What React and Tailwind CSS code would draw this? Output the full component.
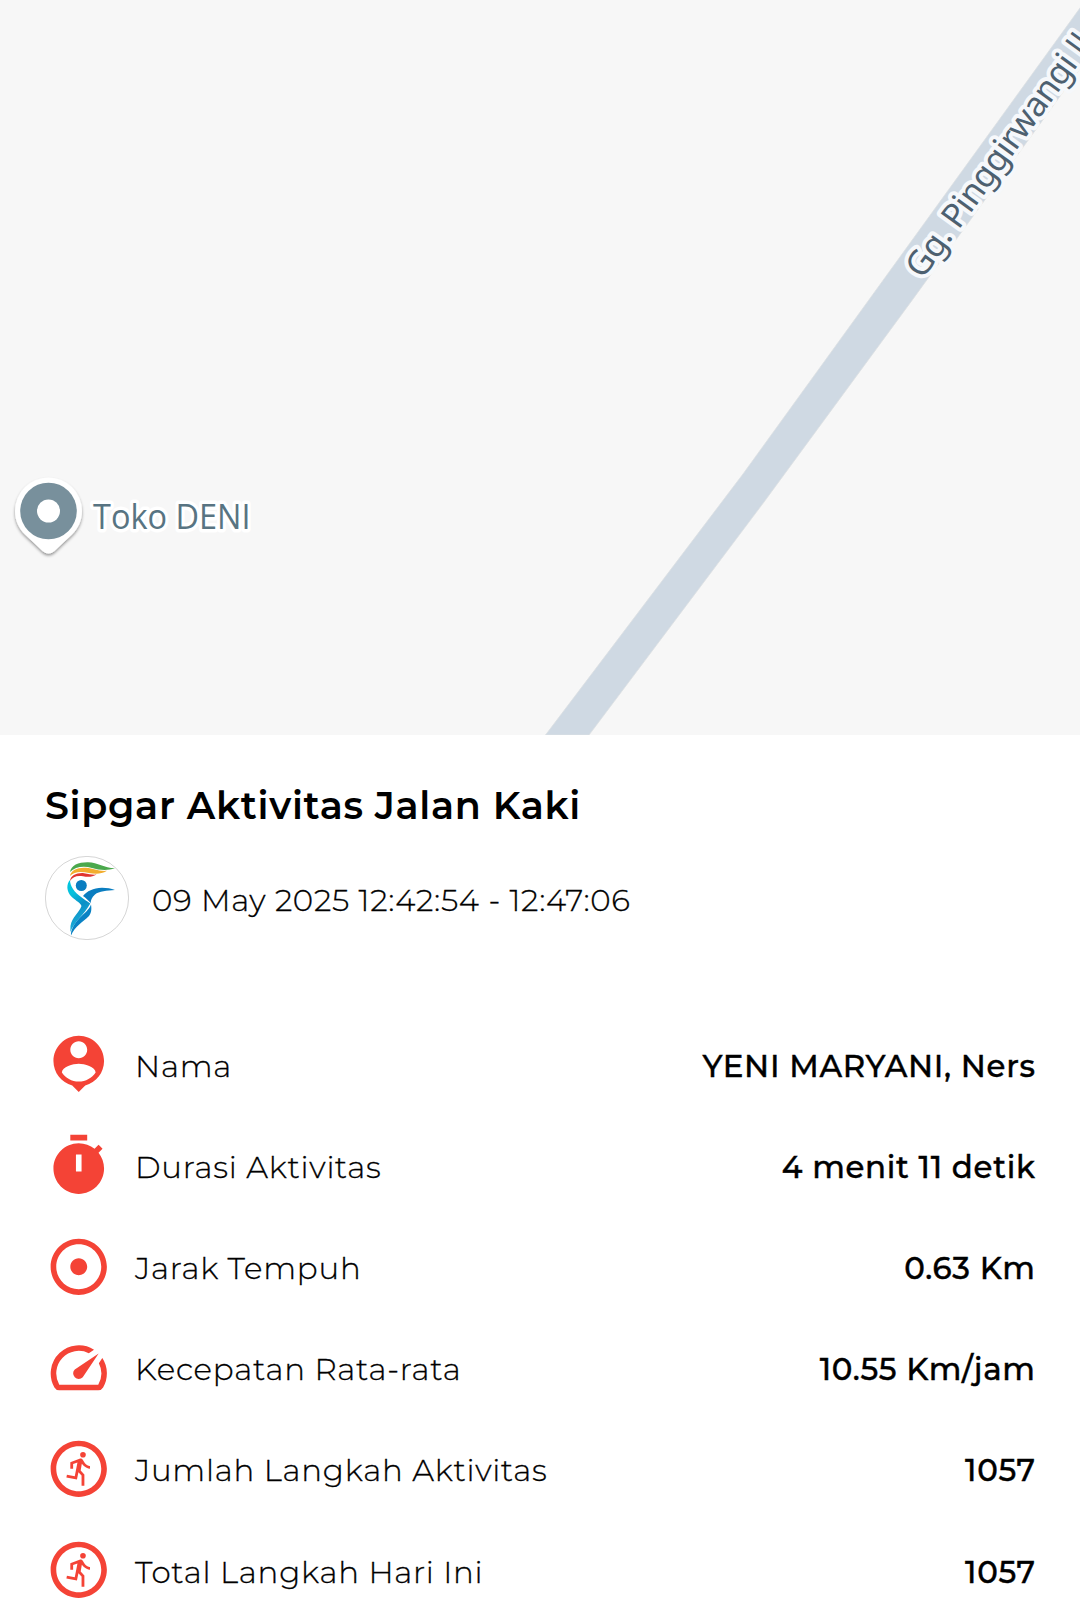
import React from "react";
import { MdAdjust, MdOutlineRunCircle, MdOutlineSpeed } from "react-icons/md";

function PersonPin({ className }) {
  return (
    <svg viewBox="0 0 24 24" fill="currentColor" className={className}>
      <path d="M12 2c-4.97 0-9 4.03-9 9 0 4.17 2.84 7.67 6.69 8.69L12 22l2.31-2.31C18.16 18.67 21 15.17 21 11c0-4.97-4.03-9-9-9zm0 2c1.66 0 3 1.34 3 3s-1.34 3-3 3-3-1.34-3-3 1.34-3 3-3zm0 14.3c-2.5 0-4.71-1.28-6-3.22.03-1.99 4-3.08 6-3.08 1.99 0 5.97 1.09 6 3.08-1.29 1.94-3.5 3.22-6 3.22z" />
    </svg>
  );
}

function Timer({ className }) {
  return (
    <svg viewBox="0 0 24 24" fill="currentColor" className={className}>
      <path d="M9 1h6v2H9zM19.03 7.39l1.42-1.42c-.43-.51-.9-.99-1.41-1.41l-1.42 1.42C16.07 4.74 14.12 4 12 4c-4.97 0-9 4.03-9 9s4.02 9 9 9 9-4.03 9-9c0-2.12-.74-4.07-1.97-5.61zM13 14h-2V8h2v6z" />
    </svg>
  );
}

const rows = [
  { icon: PersonPin, label: "Nama", value: "YENI MARYANI, Ners" },
  { icon: Timer, label: "Durasi Aktivitas", value: "4 menit 11 detik" },
  { icon: MdAdjust, label: "Jarak Tempuh", value: "0.63 Km" },
  { icon: MdOutlineSpeed, label: "Kecepatan Rata-rata", value: "10.55 Km/jam" },
  { icon: MdOutlineRunCircle, label: "Jumlah Langkah Aktivitas", value: "1057" },
  { icon: MdOutlineRunCircle, label: "Total Langkah Hari Ini", value: "1057" },
];

function Map() {
  return (
    <svg viewBox="0 0 1080 735" className="block h-[735px] w-full bg-[#f7f7f7]">
      <defs>
        <filter id="pinShadow" x="-30%" y="-30%" width="160%" height="160%">
          <feDropShadow dx="0" dy="2" stdDeviation="1.8" floodColor="#000" floodOpacity="0.4" />
        </filter>
      </defs>
      <path d="M545.5 735 743 474 1093 -10H1137L912.3 300 764 502 589 735Z" fill="#cfd9e3" stroke="#dcdfe2" strokeWidth="0.8" />
      <g transform="translate(922.5 280) rotate(-54.1)">
        <text
          fontFamily="'Noto Sans', sans-serif"
          fontSize="34"
          letterSpacing="-0.6"
          fill="#4d6070"
          stroke="#f6f8fb"
          strokeWidth="8"
          strokeLinejoin="round"
          paintOrder="stroke"
        >
          Gg. Pinggirwangi <tspan fontFamily="'Open Sans', sans-serif">II</tspan>
        </text>
      </g>
      <path
        d="M48.5 477.5a33.5 33.5 0 0 0-33.5 33.5c0 10 4 17.5 10 23.5L42.5 551q6 5 12 0L72 534.5c6-6 10-13.5 10-23.5a33.5 33.5 0 0 0-33.5-33.5Z"
        fill="#fff"
        filter="url(#pinShadow)"
      />
      <circle cx="48.5" cy="511" r="28.3" fill="#78909c" />
      <circle cx="48.5" cy="511" r="11.5" fill="#fff" />
      <text
        x="93"
        y="529.3"
        fontFamily="'Open Sans', sans-serif"
        fontSize="35.5"
        fontWeight="450"
        textLength="157.5"
        lengthAdjust="spacingAndGlyphs"
        fill="#587482"
        stroke="#fff"
        strokeWidth="7"
        strokeLinejoin="round"
        paintOrder="stroke"
      >
        Toko DENI
      </text>
    </svg>
  );
}

function Logo() {
  return (
    <svg viewBox="0 0 84 84" className="size-[84px] shrink-0">
      <defs>
        <linearGradient id="bodyLeft" x1="0" y1="0" x2="0.3" y2="1">
          <stop offset="0" stopColor="#00c8e0" />
          <stop offset="0.3" stopColor="#08c0dc" />
          <stop offset="0.6" stopColor="#0a8fc6" />
          <stop offset="1" stopColor="#20b4dc" />
        </linearGradient>
      </defs>
      <circle cx="42" cy="42" r="41.6" fill="#fff" stroke="#b8b8b8" strokeWidth="0.6" />
      <path d="M25 16C26 9 34 6 43 6.2C53 6.5 59 12 70 12.3C62 15 54 14 47 12C38 9.5 30 11 25 16Z" fill="#4aa84c" />
      <path d="M25 20C26 14 33 11.2 41 11.8C49 12.5 53 15.500 62 14.8C56 18.500 50 18 44 17C36 15 29 15.500 25 20Z" fill="#f2ad2e" />
      <path d="M25 25C25.500 19.5 32 16.5 39 17.2C44 18 47 19 51.5 18.600C47 21.500 42 21 38 20.300C32 19.300 28 20.500 25 25Z" fill="#e0352f" />
      <circle cx="36.3" cy="29.5" r="5.5" fill="#0a7dc0" />
      <path d="M25 24C21.500 28 21.500 34 25 39C29 44 35 46 36.500 50C34 57 27 61 25.500 70L25.300 76C29 66 39 59 45.300 47.500C39 43 32 39 28 33C26 30 25 27 25 24Z" fill="url(#bodyLeft)" />
      <path d="M38 40C42 35 48 32 57 31.700C62 31.700 66 32.500 70 34C62 34.500 54 35 50 38.500C46.500 41.500 45.800 44.500 45.700 47C43 44 41 42 38 40Z" fill="#0a7dc0" />
      <path d="M46 48.500C46.500 52 47 56 44 60C38 66 30 70 26 79.500C25.500 74 29 68 34.500 62C39.500 57 44 54 46 48.500Z" fill="#0a82c4" />
    </svg>
  );
}

export default function App() {
  return (
    <main className="h-[1607px] w-[1080px] overflow-hidden bg-white font-['Montserrat','Inter',sans-serif] text-black">
      <Map />
      <section className="px-[45px] pt-[47px]">
        <h1 className="h-12 whitespace-nowrap text-[38px] leading-12 font-semibold tracking-[0.7px]">
          Sipgar Aktivitas Jalan Kaki
        </h1>
        <div className="mt-[26px] flex items-center gap-[23px]">
          <Logo />
          <p className="mt-1 whitespace-nowrap text-[30.9px] leading-10 font-light tracking-[0.7px] [-webkit-text-stroke:0.3px_black]">
            09 May 2025 12:42:54 - 12:47:06
          </p>
        </div>
        <ul className="mt-[73.5px]">
          {rows.map(({ icon: Icon, label, value }) => (
            <li key={label} className="flex h-[101.2px] items-center">
              <Icon className="size-[67.5px] shrink-0 text-[#f44336]" />
              <span className="mt-[3px] ml-[22.5px] whitespace-nowrap text-[30.9px] leading-10 font-light tracking-[0.75px] [-webkit-text-stroke:0.3px_black]">
                {label}
              </span>
              <span className="mt-[3px] -mr-[0.7px] ml-auto whitespace-nowrap text-[30.9px] leading-10 font-medium tracking-[0.7px] [-webkit-text-stroke:0.4px_black]">
                {value}
              </span>
            </li>
          ))}
        </ul>
      </section>
    </main>
  );
}
